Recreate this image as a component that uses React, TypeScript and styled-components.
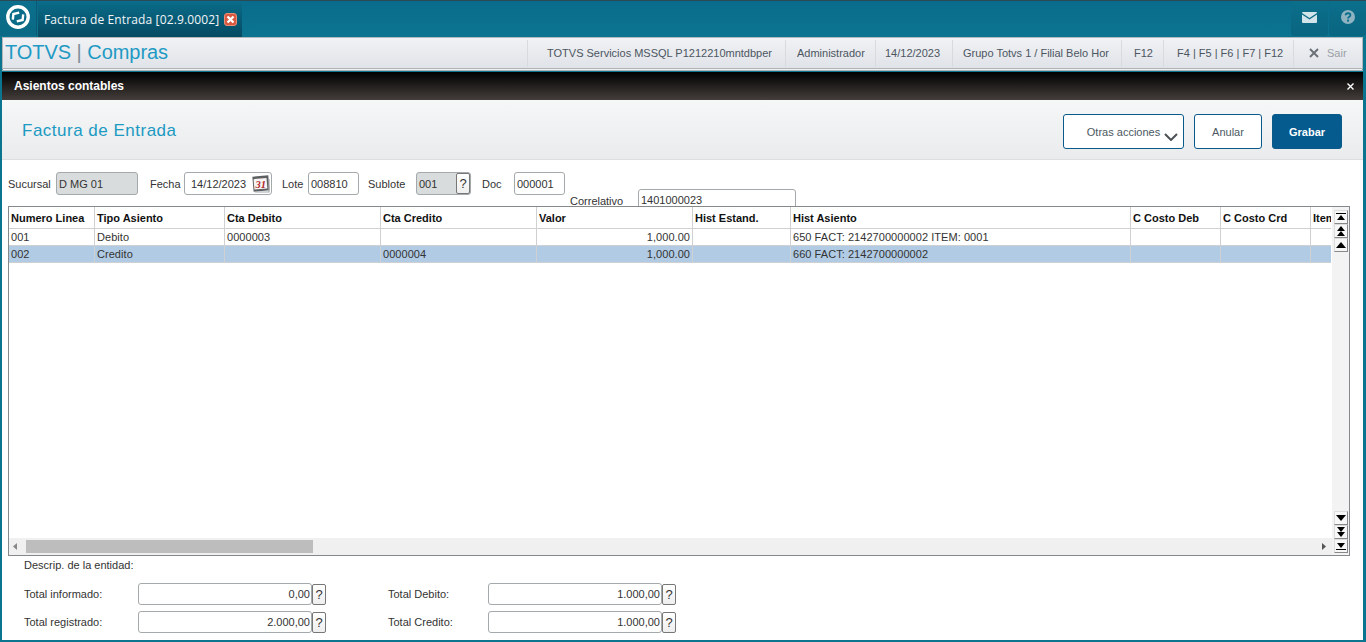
import React from "react";
import styled, { createGlobalStyle } from "styled-components";

const Global = createGlobalStyle`
  html, body { margin: 0; padding: 0; height: 100%; overflow: hidden; }
  body { font-family: "Liberation Sans", Arial, sans-serif; font-size: 11px; color: #222; }
  * { box-sizing: border-box; }
`;

const Page = styled.div`
  width: 1366px; height: 642px; overflow: hidden; display: flex; flex-direction: column;
  background: #0b7590;
`;
const TopBar = styled.div`
  height: 37px; flex: none; display: flex; align-items: stretch; border-top: 1px solid #2b4a55;
  background: linear-gradient(#0a6c8c, #0b7490);
`;
const LogoBox = styled.div`
  width: 37px; display: flex; align-items: center; justify-content: center; margin-bottom: 1px; padding-bottom: 3px;
  background: linear-gradient(#0b6f8d, #0a6a85); border-right: 1px solid #0a5a74;
`;
const Tab = styled.div`
  width: 204px; margin-left: 1px; margin-top: 2px; display: flex; align-items: center; gap: 5px; padding: 0 0 2px 6px;
  background: linear-gradient(#0a6a87, #064a62);
`;
const TabTitle = styled.span`
  font-family: "Open Sans", sans-serif; font-size: 12px; letter-spacing: 0.13px; color: #f2f6f8; white-space: nowrap;
`;
const TopSpacer = styled.div` flex: 1; `;
const TopBtn = styled.div`
  width: 37px; margin-left: 1px; margin-bottom: 1px; display: flex; align-items: center; justify-content: center; padding-bottom: 3px;
  background: linear-gradient(#0b6f8c, #0a6580); border-radius: 0 0 3px 3px;
`;
const AppBar = styled.div`
  height: 34px; flex: none; margin: 0 3px 0 2px; display: flex; align-items: center; justify-content: space-between;
  border: 1px solid #b5b8bb; border-bottom: 3px double #b0b3b5;
  background: linear-gradient(#f0f2f5, #e0e3e8);
`;
const Brand = styled.div`
  color: #1e9ac4; font-size: 20px; padding-left: 2px; margin-top: -2px; white-space: nowrap; letter-spacing: -0.05px;
`;
const BrandBar = styled.span` color: #7d8f9b; `;
const Status = styled.div` display: flex; align-items: center; height: 100%; `;
const StatusItem = styled.div<{ $w: number; $pad?: number }>`
  width: ${p => p.$w}px; height: 27px; display: flex; align-items: center; padding-left: ${p => p.$pad ?? 11}px;
  border-left: 1px solid #d8dadd; color: #4c5661; font-size: 11px; white-space: nowrap; overflow: hidden;
`;
const SairText = styled.span` color: #9a9fa5; margin-left: 8px; `;
const Dialog = styled.div`
  flex: 1; margin: 1px 3px 2px 2px; display: flex; flex-direction: column; background: #fff; min-height: 0;
`;
const DialogTitle = styled.div`
  height: 28px; flex: none; display: flex; align-items: center; justify-content: space-between; padding: 0 9px 0 12px;
  background: linear-gradient(#000, #443e3b); color: #fff; font-weight: bold; font-size: 12px;
`;
const ActionBar = styled.div`
  height: 60px; flex: none; display: flex; align-items: center; border-bottom: 1px solid #dcdee0; padding: 3px 21px 0 20px;
  background: linear-gradient(#f6f7f7, #e9ebed);
`;
const ActionTitle = styled.div` color: #1b9ac2; font-size: 17px; flex: 1; letter-spacing: 0.5px; `;
const ActionBtn = styled.div<{ $w: number; $primary?: boolean }>`
  width: ${p => p.$w}px; height: 35px; margin-left: 10px; display: flex; align-items: center; justify-content: center; padding-top: 2px;
  border-radius: 3px; border: 1px solid #0a5a8c; position: relative; font-size: 11px;
  background: ${p => (p.$primary ? "#055a8e" : "#fff")}; color: ${p => (p.$primary ? "#fff" : "#4b5862")};
  font-weight: ${p => (p.$primary ? "bold" : "normal")};
`;
const Chevron = styled.svg` position: absolute; right: 5px; top: 18px; `;
const FormRow = styled.div`
  height: 23px; flex: none; margin: 12px 0 0 6px; display: flex; align-items: center;
`;
const FieldLabel = styled.span<{ $w: number; $ml?: number }>`
  width: ${p => p.$w}px; margin-left: ${p => p.$ml ?? 0}px; color: #333; white-space: nowrap; flex: none;
`;
const Field = styled.div<{ $w: number; $h?: number; $disabled?: boolean; $right?: boolean; $pl?: number }>`
  width: ${p => p.$w}px; height: ${p => p.$h ?? 23}px; flex: none; border: 1px solid #a4a9ab; border-radius: 3px; display: flex; align-items: center;
  justify-content: ${p => (p.$right ? "flex-end" : "space-between")}; padding-left: ${p => p.$pl ?? 2}px; padding-right: ${p => (p.$right ? 1 : 0)}px;
  background: ${p => (p.$disabled ? "#d9dcdd" : "#fff")}; color: #333; white-space: nowrap;
`;
const CorrelRow = styled.div`
  height: 17px; flex: none; margin: -6px 0 0 568px; display: flex; align-items: flex-end; overflow: hidden;
`;
const CorrelLabel = styled.span` width: 68px; color: #333; line-height: 11px; margin-bottom: -1px; `;
const CorrelField = styled.div`
  width: 158px; height: 23px; flex: none; margin-bottom: -6px; border: 1px solid #a4a9ab; border-radius: 3px; padding: 4px 0 0 2px; background: #fff;
  color: #333; line-height: 13px;
`;
const QBtn = styled.div<{ $h?: number }>`
  width: 14px; height: ${p => p.$h ?? 21}px; flex: none; border: 1px solid #777; border-radius: 2px; background: linear-gradient(#fff, #eee);
  display: flex; align-items: center; justify-content: center; font-size: 13px; color: #333;
`;
const GridBox = styled.div`
  margin: 0 13px 0 6px; height: 350px; flex: none; border: 1px solid #85898c; display: flex;
  background: #fff;
`;
const GridMain = styled.div` width: 1323px; flex: none; display: flex; flex-direction: column; min-height: 0; `;
const TableArea = styled.div` flex: 1; overflow: hidden; width: 1322px; `;
const Row = styled.div<{ $sel?: boolean; $head?: boolean }>`
  display: grid; grid-template-columns: 86px 130px 156px 156px 156px 98px 340px 90px 90px 40px;
  height: ${p => (p.$head ? 22 : 17)}px; background: ${p => (p.$sel ? "#b1cbe5" : "#fff")};
  border-bottom: 1px solid #cfd0d1;
`;
const Cell = styled.div<{ $head?: boolean; $right?: boolean }>`
  padding: 0 2px; border-right: 1px solid #cfd0d1; display: flex; align-items: center; overflow: hidden; white-space: nowrap;
  justify-content: ${p => (p.$right ? "flex-end" : "flex-start")}; font-weight: ${p => (p.$head ? "bold" : "normal")};
  color: ${p => (p.$head ? "#111" : "#333")}; letter-spacing: ${p => (p.$head ? "0" : "0.05px")};
  &:last-child { border-right: 0; }
`;
const VScroll = styled.div`
  flex: 1; background: #f3f3f3; display: flex; flex-direction: column; justify-content: space-between; align-items: center; padding: 3px 0 2px;
`;
const VGroup = styled.div` display: flex; flex-direction: column; `;
const ScrollBtn = styled.div`
  width: 14px; height: 14px; border: 1px solid #c8c8c8; border-color: #ddd #888 #888 #ddd; background: #f7f7f7; display: flex; align-items: center; justify-content: center;
`;
const HScroll = styled.div`
  height: 17px; flex: none; background: #f0f0f0; display: flex; align-items: center; padding-left: 4px; position: relative;
`;
const Thumb = styled.div` width: 287px; height: 13px; background: #bdbdbd; margin-left: 9px; `;
const RightArrow = styled.svg` position: absolute; right: 6px; top: 5px; `;
const Descrip = styled.div` margin: 3px 0 0 22px; height: 13px; line-height: 13px; color: #333; flex: none; `;
const Totals = styled.div` margin: 11px 0 0 22px; display: grid; grid-template-columns: 364px 288px; row-gap: 6px; `;
const TotalPair = styled.div` display: flex; align-items: center; `;
const TotalWrap = styled.div` display: flex; align-items: center; `;

const IconSvg = styled.svg` display: block; flex: none; `;

const Up = ({ line, dbl }: { line?: boolean; dbl?: boolean }) => (
  <IconSvg width="10" height="11" viewBox="0 0 10 11">
    {line && <rect x="0" y="1" width="10" height="1" fill="#000" />}
    {dbl ? <>
      <path d="M5 0 L9 5 H1Z" fill="#000" /><path d="M5 5 L9 10 H1Z" fill="#000" />
    </> : <path d={line ? "M5 3 L9 8 H1Z" : "M5 2 L10 8 H0Z"} fill="#000" />}
  </IconSvg>
);
const Down = ({ line, dbl }: { line?: boolean; dbl?: boolean }) => (
  <IconSvg width="10" height="11" viewBox="0 0 10 11">
    {dbl ? <>
      <path d="M1 0 H9 L5 5Z" fill="#000" /><path d="M1 5 H9 L5 10Z" fill="#000" />
    </> : <path d={line ? "M1 2 H9 L5 7Z" : "M0 2 H10 L5 8Z"} fill="#000" />}
    {line && <rect x="0" y="8" width="10" height="1" fill="#000" />}
  </IconSvg>
);

const cols = ["Numero Linea", "Tipo Asiento", "Cta Debito", "Cta Credito", "Valor", "Hist Estand.", "Hist Asiento", "C Costo Deb", "C Costo Crd", "Item"];
const rows = [
  ["001", "Debito", "0000003", "", "1,000.00", "", "650 FACT: 2142700000002 ITEM: 0001", "", "", ""],
  ["002", "Credito", "", "0000004", "1,000.00", "", "660 FACT: 2142700000002", "", "", ""],
];

const Total = ({ label, value, lw }: { label: string; value: string; lw: number }) => (
  <TotalPair>
    <FieldLabel $w={lw}>{label}</FieldLabel>
    <TotalWrap>
      <Field $w={174} $h={22} $right>{value}</Field>
      <QBtn>?</QBtn>
    </TotalWrap>
  </TotalPair>
);

export default function App() {
  return (
    <Page>
      <Global />
      <TopBar>
        <LogoBox>
          <IconSvg width="24" height="24" viewBox="0 0 24 24">
            <circle cx="12" cy="12" r="10.2" fill="none" stroke="#fff" strokeWidth="3.4" />
            <path d="M6.8 14.6 L7.4 9 L13.2 7.6" fill="none" stroke="#fff" strokeWidth="2.4" />
            <path d="M17.2 9.4 L16.6 15 L10.8 16.4" fill="none" stroke="#fff" strokeWidth="2.4" />
          </IconSvg>
        </LogoBox>
        <Tab>
          <TabTitle>Factura de Entrada [02.9.0002]</TabTitle>
          <IconSvg width="13" height="13" viewBox="0 0 13 13">
            <rect x="0.5" y="0.5" width="12" height="12" rx="2.5" fill="#d9583f" stroke="#e88f78" />
            <path d="M3.5 3.5 L9.5 9.5 M9.5 3.5 L3.5 9.5" stroke="#fff" strokeWidth="2.4" />
          </IconSvg>
        </Tab>
        <TopSpacer />
        <TopBtn>
          <IconSvg width="15" height="11" viewBox="0 0 15 11">
            <path d="M0 1 Q0 0 1 0 H14 Q15 0 15 1 L7.5 6 Z" fill="#d3e4ea" />
            <path d="M0 2.6 L7.5 7.6 L15 2.6 V10 Q15 11 14 11 H1 Q0 11 0 10 Z" fill="#d3e4ea" />
          </IconSvg>
        </TopBtn>
        <TopBtn>
          <IconSvg width="14" height="14" viewBox="0 0 14 14">
            <circle cx="7" cy="7" r="7" fill="#8fb3c1" />
            <path d="M4.6 5.2 C4.8 2.6 9.4 2.6 9.4 5.2 C9.4 6.8 7 6.9 7 8.6" fill="none" stroke="#0b6f8c" strokeWidth="1.8" />
            <rect x="6" y="9.6" width="2" height="2" fill="#0b6f8c" />
          </IconSvg>
        </TopBtn>
      </TopBar>
      <AppBar>
        <Brand>TOTVS <BrandBar>|</BrandBar> Compras</Brand>
        <Status>
          <StatusItem $w={258} $pad={19}>TOTVS Servicios MSSQL P1212210mntdbper</StatusItem>
          <StatusItem $w={90}>Administrador</StatusItem>
          <StatusItem $w={77} $pad={9}>14/12/2023</StatusItem>
          <StatusItem $w={169} $pad={10}>Grupo Totvs 1 / Filial Belo Hor</StatusItem>
          <StatusItem $w={42} $pad={12}>F12</StatusItem>
          <StatusItem $w={130} $pad={13}>F4 | F5 | F6 | F7 | F12</StatusItem>
          <StatusItem $w={69} $pad={15}>
            <IconSvg width="10" height="10" viewBox="0 0 10 10"><path d="M1 1 L9 9 M9 1 L1 9" stroke="#6a7076" strokeWidth="1.9" /></IconSvg>
            <SairText>Sair</SairText>
          </StatusItem>
        </Status>
      </AppBar>
      <Dialog>
        <DialogTitle>
          <span>Asientos contables</span>
          <IconSvg width="7" height="7" viewBox="0 0 7 7"><path d="M0.5 0.5 L6.5 6.5 M6.5 0.5 L0.5 6.5" stroke="#fff" strokeWidth="1.4" /></IconSvg>
        </DialogTitle>
        <ActionBar>
          <ActionTitle>Factura de Entrada</ActionTitle>
          <ActionBtn $w={121}>
            Otras acciones
            <Chevron width="14" height="8" viewBox="0 0 14 8"><path d="M1 1 L7 7 L13 1" fill="none" stroke="#4b5157" strokeWidth="2" /></Chevron>
          </ActionBtn>
          <ActionBtn $w={68}>Anular</ActionBtn>
          <ActionBtn $w={70} $primary>Grabar</ActionBtn>
        </ActionBar>
        <FormRow>
          <FieldLabel $w={48}>Sucursal</FieldLabel>
          <Field $w={82} $disabled>D MG 01</Field>
          <FieldLabel $w={34} $ml={12}>Fecha</FieldLabel>
          <Field $w={88} $pl={6}>
            14/12/2023
            <IconSvg width="20" height="20" viewBox="0 0 20 20">
              <rect x="2" y="2" width="16" height="15" fill="#5d6063" transform="rotate(-5 10 10)" />
              <rect x="3" y="4.5" width="13" height="10.5" fill="#f7f4f4" transform="rotate(-5 10 10)" />
              <path d="M4 18 H18 V5" fill="none" stroke="#a7a9ac" strokeWidth="1.2" />
              <text x="4.5" y="14" fontFamily="Liberation Serif" fontStyle="italic" fontWeight="bold" fontSize="10.5" fill="#b2262b">31</text>
            </IconSvg>
          </Field>
          <FieldLabel $w={26} $ml={10}>Lote</FieldLabel>
          <Field $w={51}>008810</Field>
          <FieldLabel $w={48} $ml={9}>Sublote</FieldLabel>
          <Field $w={55} $disabled>
            <span>001</span>
            <QBtn>?</QBtn>
          </Field>
          <FieldLabel $w={32} $ml={11}>Doc</FieldLabel>
          <Field $w={51}>000001</Field>
        </FormRow>
        <CorrelRow>
          <CorrelLabel>Correlativo</CorrelLabel>
          <CorrelField>1401000023</CorrelField>
        </CorrelRow>
        <GridBox>
          <GridMain>
            <TableArea>
              <Row $head>{cols.map(c => <Cell key={c} $head>{c}</Cell>)}</Row>
              {rows.map((r, i) => (
                <Row key={i} $sel={i === 1}>
                  {r.map((v, j) => <Cell key={j} $right={j === 4}>{v}</Cell>)}
                </Row>
              ))}
            </TableArea>
            <HScroll>
              <IconSvg width="4" height="7" viewBox="0 0 4 7"><path d="M4 0 V7 L0 3.5Z" fill="#888" /></IconSvg>
              <Thumb />
              <RightArrow width="4" height="7" viewBox="0 0 4 7"><path d="M0 0 V7 L4 3.5Z" fill="#555" /></RightArrow>
            </HScroll>
          </GridMain>
          <VScroll>
            <VGroup>
              <ScrollBtn><Up line /></ScrollBtn>
              <ScrollBtn><Up dbl /></ScrollBtn>
              <ScrollBtn><Up /></ScrollBtn>
            </VGroup>
            <VGroup>
              <ScrollBtn><Down /></ScrollBtn>
              <ScrollBtn><Down dbl /></ScrollBtn>
              <ScrollBtn><Down line /></ScrollBtn>
            </VGroup>
          </VScroll>
        </GridBox>
        <Descrip>Descrip. de la entidad:</Descrip>
        <Totals>
          <Total label="Total informado:" value="0,00" lw={114} />
          <Total label="Total Debito:" value="1.000,00" lw={100} />
          <Total label="Total registrado:" value="2.000,00" lw={114} />
          <Total label="Total Credito:" value="1.000,00" lw={100} />
        </Totals>
      </Dialog>
    </Page>
  );
}
